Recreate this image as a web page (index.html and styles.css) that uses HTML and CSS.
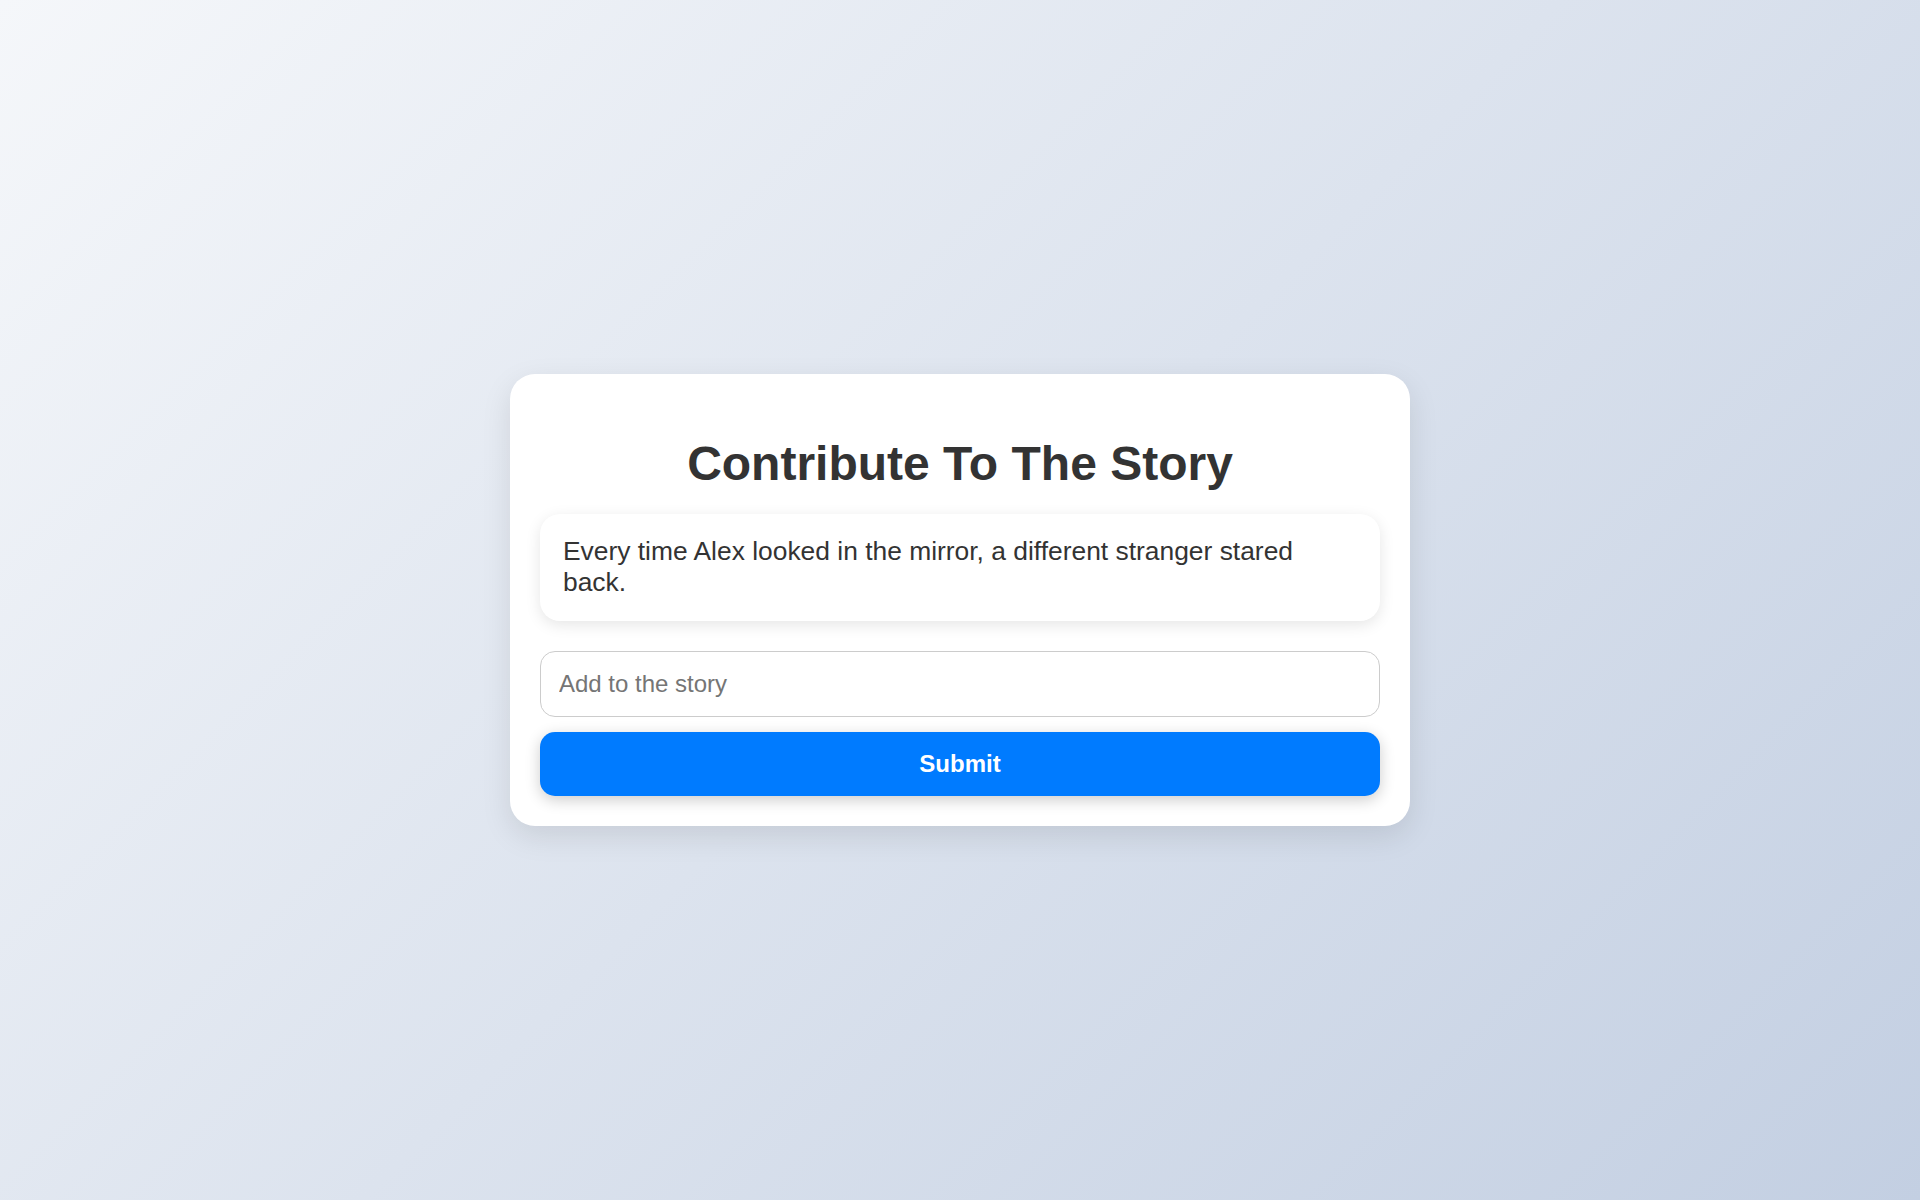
FILE: index.html
```html
<!DOCTYPE html>
<html lang="en">
<head>
<meta charset="utf-8">
<title>Contribute To The Story</title>
<link rel="stylesheet" href="styles.css">
</head>
<body>
  <main class="card">
    <h1 class="title">Contribute To The Story</h1>
    <div class="story">Every time Alex looked in the mirror, a different stranger stared back.</div>
    <form class="form">
      <input class="input" type="text" placeholder="Add to the story">
      <button class="submit" type="button">Submit</button>
    </form>
  </main>
</body>
</html>
```
FILE: styles.css
```css
* { box-sizing: border-box; }
html, body { height: 100%; }
body {
  margin: 0;
  min-height: 100vh;
  display: flex;
  align-items: center;
  justify-content: center;
  font-family: "Liberation Sans", Arial, sans-serif;
  color: #333;
  background: linear-gradient(135deg, #f5f7fa 0%, #c3cfe2 100%);
}
.card {
  width: 900px;
  background: #fff;
  border-radius: 25px;
  padding: 30px;
  box-shadow: 0 10px 30px rgba(0, 0, 0, 0.1);
}
.title {
  margin: 32px 0 23px;
  font-size: 48px;
  font-weight: bold;
  text-align: center;
  color: #333;
}
.story {
  background: #fff;
  border-radius: 20px;
  padding: 22px 23px 24px;
  font-size: 26.4px;
  line-height: 30.5px;
  color: #333;
  box-shadow: 0 4px 15px rgba(0, 0, 0, 0.1);
  margin-bottom: 30px;
}
.form {
  display: flex;
  flex-direction: column;
  gap: 15px;
}
.input {
  width: 100%;
  font-family: inherit;
  font-size: 24px;
  padding: 18px;
  border: 1px solid #ccc;
  border-radius: 15px;
  color: #333;
  outline: none;
  background: #fff;
}
.input::placeholder { color: #757575; }
.submit {
  width: 100%;
  font-family: inherit;
  font-size: 24px;
  font-weight: bold;
  padding: 18px;
  border: none;
  border-radius: 15px;
  background: #007bff;
  color: #fff;
  cursor: pointer;
  box-shadow: 0 4px 15px rgba(0, 0, 0, 0.2);
}
```
